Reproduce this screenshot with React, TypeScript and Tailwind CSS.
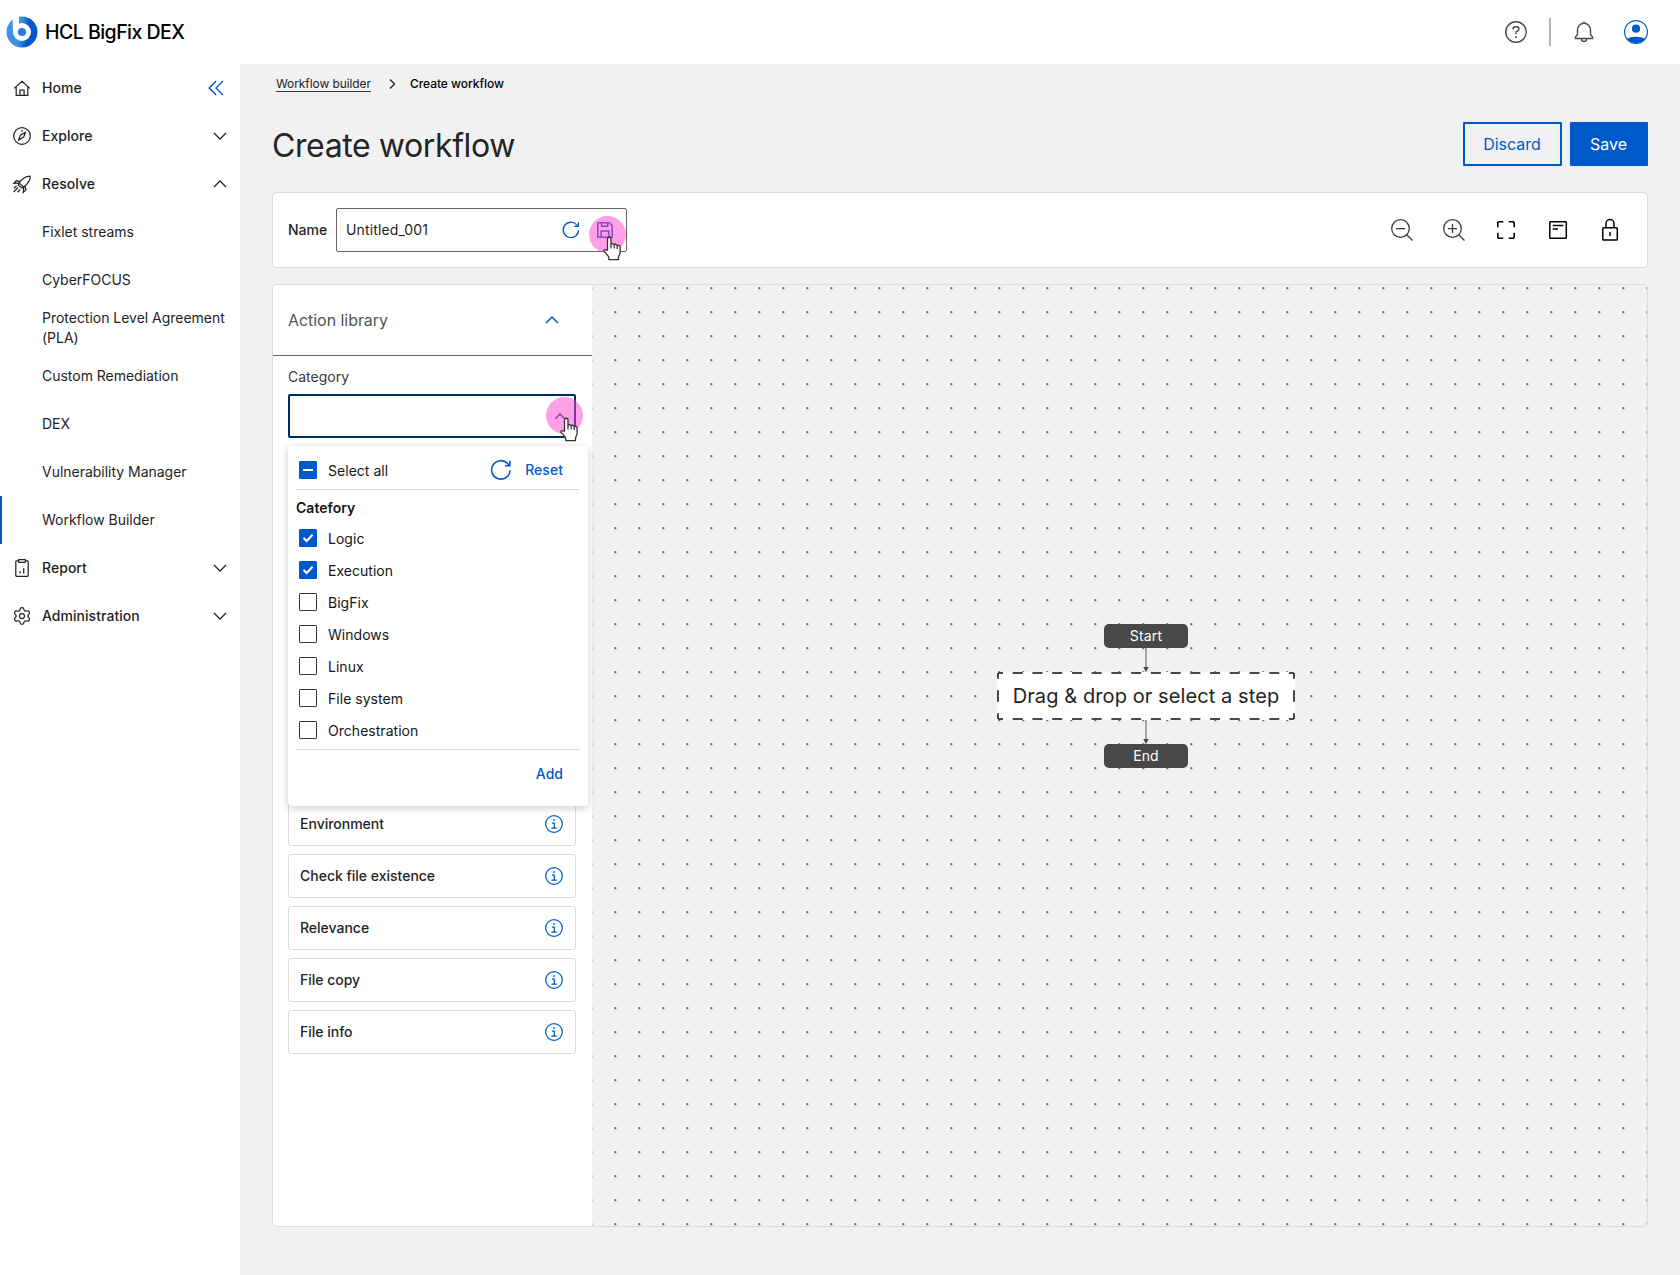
import React, { useState } from "react";
import { Settings } from "lucide-react";
import clsx from "clsx";

const subItems = [
	"Fixlet streams",
	"CyberFOCUS",
	"Protection Level Agreement (PLA)",
	"Custom Remediation",
	"DEX",
	"Vulnerability Manager",
	"Workflow Builder",
];

const categories = [
	"Logic",
	"Execution",
	"BigFix",
	"Windows",
	"Linux",
	"File system",
	"Orchestration",
];

const actions = [
	"Environment",
	"Check file existence",
	"Relevance",
	"File copy",
	"File info",
];

/* ---------- Icons ---------- */

type IconProps = {
	size?: number;
	box?: number;
	stroke?: number;
	className?: string;
	children: React.ReactNode;
};

function Icon({
	size = 20,
	box = size,
	stroke = 1.25,
	className,
	children,
}: IconProps) {
	return (
		<svg
			width={size}
			height={size}
			viewBox={`0 0 ${box} ${box}`}
			fill="none"
			stroke="currentColor"
			strokeWidth={stroke}
			className={clsx("shrink-0", className)}
		>
			{children}
		</svg>
	);
}

const HomeIcon = () => (
	<Icon>
		<path d="M2.2 10.4 10 3.4l7.8 7M4.2 9v8.4h11.6V9M7.9 17.4v-5.2h4.2v5.2" />
	</Icon>
);

const CompassIcon = () => (
	<Icon>
		<circle cx="10" cy="10" r="8.3" />
		<path d="M13.6 6.2 11.7 11l-5.2 3.1 2-5Z" strokeLinejoin="round" />
		<path d="M9.9 4.1v1.4" strokeWidth="1.5" />
	</Icon>
);

const RocketIcon = () => (
	<Icon>
		<path
			d="M7.2 9.1C9.4 5.5 12.6 2.3 18.2 2.1c.3 4.6-3 8.2-6.5 10.9Z"
			strokeLinejoin="round"
		/>
		<path d="M8.2 7.6 4.2 6.8 1.9 9.4l5.3-.3M13 12l.9 3.9-2.6 2.5.4-5.4" />
		<path d="m7.2 9.1-.9 1.9 3.6 3.1 1.8-1.1M6.2 13.4 1.6 18M4.6 11.8l-2.6 2.4M8.2 15.4 5.6 18.2" />
	</Icon>
);

const ReportIcon = () => (
	<Icon>
		<path d="M7 2.9H4.5c-.4 0-.7.3-.7.7v14c0 .4.3.7.7.7h11c.4 0 .7-.3.7-.7v-14c0-.4-.3-.7-.7-.7H13" />
		<rect x="6.6" y="1.7" width="6.8" height="2.6" rx=".4" />
		<path d="M8 15.4v-2.2M11.7 15.4V10.2" strokeWidth="1.3" />
	</Icon>
);

function Chevron({
	up = false,
	stroke,
	className,
}: {
	up?: boolean;
	stroke?: number;
	className?: string;
}) {
	return (
		<Icon size={16} stroke={stroke} className={className}>
			<path d={up ? "M2 11l6-6 6 6" : "M2 5l6 6 6-6"} />
		</Icon>
	);
}

function RefreshIcon({ size = 20 }: { size?: number }) {
	return (
		<Icon size={size} box={20} stroke={1.3} className="text-[#0059cb]">
			<path d="M17.6 10.2A7.7 7.7 0 1 1 15.5 4.6L17.3 6.3" />
			<path d="M17.4 2.2v4.2h-4.2" />
		</Icon>
	);
}

const FloppyIcon = () => (
	<Icon size={18} box={18} stroke={1.5} className="text-[#0059cb]">
		<path d="M1.8 1.8h11.4l3 3v11.4H1.8Z" strokeLinejoin="round" />
		<path d="M5.6 1.8v3.4h6V1.8M5.2 16.2V10h7.6v6.2" />
	</Icon>
);

const InfoIcon = () => (
	<Icon className="text-[#0059cb]">
		<circle cx="10" cy="10" r="8.3" />
		<path d="M8 9h2.3v5M7.5 14h5.2" />
		<circle cx="10" cy="6" r=".9" fill="currentColor" stroke="none" />
	</Icon>
);

const Logo = () => (
	<svg width="32" height="32" viewBox="0 0 32 32" className="shrink-0">
		<defs>
			<linearGradient id="ring" x1="0" y1="0" x2="1" y2="0.15">
				<stop offset="0.5" stopColor="#3f92e0" />
				<stop offset="0.75" stopColor="#0059cb" />
			</linearGradient>
		</defs>
		<circle cx="16" cy="16" r="15.5" fill="url(#ring)" />
		<circle cx="16" cy="16" r="9" fill="#fff" />
		<path d="M6.5 0H13v12.5L7 15Z" fill="#fff" />
		<circle cx="16" cy="16" r="4.1" fill="#2c7dd8" />
	</svg>
);

// Pink click marker with the hand pointer on top of it
function ClickMarker({ className }: { className?: string }) {
	return (
		<div className={clsx("absolute size-[37px]", className)}>
			<div className="size-full rounded-full bg-[#ff3fcb]/50" />
			<svg
				width="22"
				height="26"
				viewBox="0 0 22 26"
				className="absolute left-[13px] top-5"
			>
				<path
					d="M5.5 14.2V3.2C5.5.6 9 .6 9 3.2v5.4c.3-1.5 3-1.3 3.2.4.6-1.2 2.8-.9 3 .8.7-1 2.9-.4 2.9 1.3v5.3c0 1.8-1.6 3.3-1.6 5v2.2H6.8v-2c0-1.6-2-2.7-2.9-4.7L2 15.5c-.8-1.6 1.1-2.5 2.1-1.3Z"
					fill="#fff"
					stroke="#333"
					strokeWidth="1.3"
					strokeLinejoin="round"
				/>
				<path d="M9 8.5v4M12.2 9v3.5M15.2 10v3" stroke="#333" strokeWidth="1.2" />
			</svg>
		</div>
	);
}

/* ---------- Layout pieces ---------- */

function Header() {
	return (
		<header className="flex h-16 items-center justify-between bg-white pl-[6px] pr-8">
			<div className="flex items-center gap-[7px]">
				<Logo />
				<span className="pt-[2px] text-[19.5px] font-medium tracking-[-0.53px] text-black">
					HCL BigFix DEX
				</span>
			</div>
			<div className="flex items-center text-[#484848]">
				<Icon size={24} stroke={1.4}>
					<circle cx="12" cy="12" r="10.2" />
					<path d="M9 9.5V9c0-1.3 1-2.3 2.3-2.3h1.4C14 6.7 15 7.7 15 8.9s-.9 2.1-2 2.3c-.7.2-1 .6-1 1.2v1.9" />
					<circle cx="12" cy="17.2" r="1" fill="currentColor" stroke="none" />
				</Icon>
				<div className="ml-[21px] h-7 w-[2px] bg-[#b3b3b3]" />
				<Icon size={24} stroke={1.4} className="ml-[21px]">
					<path d="M12 1.5v1.8M3.5 18.5h17v-1.6l-2-2.4V9.8a6.5 6.5 0 0 0-13 0v4.7l-2 2.4ZM9.4 18.7c0 3.6 5.2 3.6 5.2 0" />
				</Icon>
				<svg width="24" height="24" viewBox="0 0 24 24" className="ml-7">
					<circle cx="12" cy="12" r="11.4" fill="#fff" stroke="#0059cb" strokeWidth="1.2" />
					<circle cx="12" cy="8.7" r="4.1" fill="#0059cb" />
					<path d="M3 18.8c2-1.3 5.4-2 9-2s7 .7 9 2A11.4 11.4 0 0 1 3 18.8Z" fill="#0059cb" />
				</svg>
			</div>
		</header>
	);
}

type NavItemProps = {
	icon: React.ReactNode;
	label: string;
	right: React.ReactNode;
};

function NavItem({ icon, label, right }: NavItemProps) {
	return (
		<div className="flex h-12 items-center pl-3 pr-3">
			{icon}
			<span className="ml-[10px] flex-1 font-medium tracking-[0.04px]">
				{label}
			</span>
			{right}
		</div>
	);
}

function Sidebar() {
	return (
		<nav className="w-60 shrink-0 bg-white text-sm leading-5 text-[#242424]">
			<NavItem
				icon={<HomeIcon />}
				label="Home"
				right={
					<Icon size={16} stroke={1.4} className="mr-1 text-[#0059cb]">
						<path d="M8.2 1 1.2 8l7 7M15 1 8 8l7 7" />
					</Icon>
				}
			/>
			<NavItem icon={<CompassIcon />} label="Explore" right={<Chevron />} />
			<NavItem icon={<RocketIcon />} label="Resolve" right={<Chevron up />} />
			{subItems.map((item) => (
				<div
					key={item}
					className={clsx(
						"flex h-12 items-center border-l-2 pl-10 pr-2 tracking-[-0.02px]",
						item === "Workflow Builder"
							? "border-[#0059cb]"
							: "border-transparent"
					)}
				>
					{item}
				</div>
			))}
			<NavItem icon={<ReportIcon />} label="Report" right={<Chevron />} />
			<NavItem
				icon={<Settings size={20} strokeWidth={1.5} className="shrink-0" />}
				label="Administration"
				right={<Chevron />}
			/>
		</nav>
	);
}

function Toolbar() {
	return (
		<div className="mt-[26px] flex h-[76px] items-center justify-between rounded-[5px] border border-[#dcdcdc] bg-white pl-[15px] pr-[25px]">
			<div className="flex items-center">
				<label className="w-12 text-sm font-medium">Name</label>
				<div className="relative flex h-11 w-[291px] items-center rounded-[2px] border border-[#666] pl-[9px] pr-3">
					<span className="flex-1 text-sm tracking-[0.14px]">Untitled_001</span>
					<RefreshIcon />
					<div className="ml-[15px]">
						<FloppyIcon />
					</div>
					<ClickMarker className="left-[252px] top-[7px]" />
				</div>
			</div>
			<div className="flex items-center gap-7 text-black">
				<Icon size={24} className="text-[#383838]">
					<circle cx="10.5" cy="10.5" r="8.8" />
					<path d="m16.7 16.7 5.8 5.8M6 10.5h9" />
				</Icon>
				<Icon size={24} className="text-[#383838]">
					<circle cx="10.5" cy="10.5" r="8.8" />
					<path d="m16.7 16.7 5.8 5.8M6 10.5h9M10.5 6v9" />
				</Icon>
				<Icon size={24} stroke={1.6}>
					<path d="M3.8 9.3V5c0-.7.5-1.2 1.2-1.2h4.3M14.7 3.8H19c.7 0 1.2.5 1.2 1.2v4.3M20.2 14.7V19c0 .7-.5 1.2-1.2 1.2h-4.3M9.3 20.2H5c-.7 0-1.2-.5-1.2-1.2v-4.3" />
				</Icon>
				<Icon size={24} stroke={1.5}>
					<rect x="3.8" y="3.8" width="16.5" height="16.5" rx=".8" />
					<path d="M6.7 7.5h10.6M6.7 11h5.3" />
				</Icon>
				<Icon size={24} stroke={1.5}>
					<rect x="4.8" y="9.8" width="14.5" height="12.3" rx=".8" />
					<path d="M8 9.8V5.5a4 4 0 0 1 8 0v4.3M12 14v4" />
				</Icon>
			</div>
		</div>
	);
}

type CheckboxProps = {
	checked?: boolean;
	indeterminate?: boolean;
	onClick?: () => void;
};

function Checkbox({ checked, indeterminate, onClick }: CheckboxProps) {
	const filled = checked || indeterminate;
	return (
		<button
			type="button"
			onClick={onClick}
			className={clsx(
				"flex size-[18px] items-center justify-center rounded-[1px] border text-white",
				filled ? "border-[#0059cb] bg-[#0059cb]" : "border-[#383838] bg-white"
			)}
		>
			{indeterminate && <span className="h-[2px] w-[10px] bg-white" />}
			{checked && (
				<Icon size={16} stroke={2}>
					<path d="M3.5 8 6.6 11 12.5 4.7" />
				</Icon>
			)}
		</button>
	);
}

function CategoryMenu() {
	const [selected, setSelected] = useState(["Logic", "Execution"]);

	const toggle = (name: string) => {
		setSelected((prev) =>
			prev.includes(name) ? prev.filter((n) => n !== name) : [...prev, name]
		);
	};

	return (
		<div className="absolute left-0 top-[52px] h-[360px] w-[300px] rounded-[4px] bg-white pl-2 pr-2 text-sm tracking-[0.03px] text-[#161616] shadow-[0_2px_8px_rgba(0,0,0,0.2)]">
			<div className="flex h-11 items-center border-b border-[#dcdcdc] pl-[3px] pr-[17px] pt-[5px]">
				<Checkbox
					checked={selected.length === categories.length}
					indeterminate={
						selected.length > 0 && selected.length < categories.length
					}
				/>
				<span className="ml-[11px] flex-1 pt-px">Select all</span>
				<RefreshIcon size={24} />
				<button
					type="button"
					className="ml-3 font-medium text-[#0059cb]"
					onClick={() => setSelected([])}
				>
					Reset
				</button>
			</div>
			<p className="mt-2 h-5 font-semibold leading-5">Catefory</p>
			<div className="mt-[4px] border-b border-[#dcdcdc] pb-[3px] pl-[3px]">
				{categories.map((name) => (
					<div key={name} className="flex h-8 items-center gap-[11px]">
						<Checkbox
							checked={selected.includes(name)}
							onClick={() => toggle(name)}
						/>
						<span className="pt-[2px]">{name}</span>
					</div>
				))}
			</div>
			<div className="flex justify-end pr-[17px] pt-[14px]">
				<button type="button" className="font-medium text-[#0059cb]">
					Add
				</button>
			</div>
		</div>
	);
}

function ActionLibrary() {
	return (
		<aside className="w-[319px] shrink-0 bg-white">
			<div className="flex h-[71px] items-center justify-between border-b border-[#666] pl-[15px] pr-8">
				<h3 className="text-base tracking-[-0.05px] text-[#555]">
					Action library
				</h3>
				<Chevron up stroke={1.5} className="text-[#0059cb]" />
			</div>
			<div className="pl-[15px] pr-4 pt-[11px]">
				<label className="block text-sm leading-5 text-[#383838]">
					Category
				</label>
				<div className="relative z-10 mt-[7px] flex h-11 w-72 items-center justify-end rounded-[2px] border-2 border-[#002c66] pr-2">
					<Icon size={12} stroke={1.3} className="text-[#002c66]">
						<path d="m1.5 8.5 4.5-4.5 4.5 4.5" />
					</Icon>
					<div className="absolute -left-0.5 -top-0.5">
						<CategoryMenu />
					</div>
					<ClickMarker className="left-[256px] top-px" />
				</div>
				<div className="mt-[364px] flex flex-col gap-2">
					{actions.map((action) => (
						<div
							key={action}
							className="flex h-11 w-72 items-center justify-between rounded-[3px] border border-[#dcdcdc] pl-[11px] pr-[11px]"
						>
							<span className="text-sm font-medium tracking-[-0.01px]">
								{action}
							</span>
							<InfoIcon />
						</div>
					))}
				</div>
			</div>
		</aside>
	);
}

function Connector() {
	return (
		<svg width="8" height="24" viewBox="0 0 8 24">
			<path d="M4 0v20" stroke="#8c8c8c" strokeWidth="1.5" />
			<path d="M1.3 19h5.4L4 24Z" fill="#484848" />
		</svg>
	);
}

function NodeLabel({ label }: { label: string }) {
	return (
		<div className="flex h-6 w-[84px] items-center justify-center rounded-[5px] bg-[#484848] text-sm tracking-[0.14px] text-white">
			{label}
		</div>
	);
}

function Canvas() {
	return (
		<div className="flex flex-1 flex-col items-center bg-[radial-gradient(circle_at_center,#606060_0.7px,transparent_1.4px)] bg-[length:24px_24px] bg-[position:11.3px_-8.8px] pl-[53px] pt-[339px]">
			<NodeLabel label="Start" />
			<Connector />
			<div className="relative flex h-12 w-[298px] items-center justify-center bg-white text-xl tracking-[0.09px]">
				{/* Every side starts and ends on half a dash */}
				<svg
					width="298"
					height="48"
					className="absolute inset-0"
					stroke="#484848"
					strokeWidth="2"
				>
					<path
						d="M1 1h296M1 47h296"
						strokeDasharray="10 9.733"
						strokeDashoffset="5"
					/>
					<path
						d="M1 1v46M297 1v46"
						strokeDasharray="11.5 11.5"
						strokeDashoffset="5.75"
					/>
				</svg>
				Drag &amp; drop or select a step
			</div>
			<Connector />
			<NodeLabel label="End" />
		</div>
	);
}

function App() {
	return (
		<div className="flex h-[1275px] w-[1680px] flex-col overflow-hidden bg-[#f1f1f1] font-['Inter',sans-serif] text-[#242424]">
			<Header />
			<div className="flex flex-1">
				<Sidebar />
				<main className="flex-1 pl-8 pr-8 pt-[10px]">
					{/* Breadcrumb */}
					<div className="flex h-5 items-center pl-1 text-xs">
						<a className="border-b border-[#383838] leading-[14px] tracking-[-0.09px]">
							Workflow builder
						</a>
						<Icon size={12} stroke={1.3} className="ml-[15px]">
							<path d="m4 1.5 4.5 4.5L4 10.5" />
						</Icon>
						<span className="ml-3 font-medium tracking-[-0.04px] text-black">
							Create workflow
						</span>
					</div>

					<div className="mt-7 flex h-11 items-center justify-between">
						<h1 className="pt-[3px] text-[32px] font-normal tracking-[-0.4px]">
							Create workflow
						</h1>
						<div className="flex gap-2 text-base">
							<button
								type="button"
								className="h-11 w-[99px] rounded-[1px] border-2 border-[#0059cb] pr-px text-[#0059cb]"
							>
								Discard
							</button>
							<button
								type="button"
								className="h-11 w-[78px] rounded-[1px] bg-[#0059cb] pr-px text-white"
							>
								Save
							</button>
						</div>
					</div>

					<Toolbar />

					{/* Builder */}
					<div className="mt-4 flex h-[943px] overflow-hidden rounded-[5px] border border-[#dcdcdc]">
						<ActionLibrary />
						<Canvas />
					</div>
				</main>
			</div>
		</div>
	);
}

export default App;
